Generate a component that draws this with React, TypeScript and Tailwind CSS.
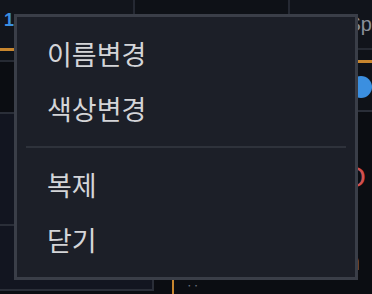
import React from 'react';

const items = ['이름변경', '색상변경'];
const items2 = ['복제', '닫기'];

function MenuItem({ label }: { label: string }) {
  return (
    <div className="flex h-[55px] items-center pl-[30px] text-[27px] leading-none text-[#d4d5d8]">
      {label}
    </div>
  );
}

export default function App() {
  return (
    <div
      className="relative flex h-[294px] w-[372px] flex-col overflow-hidden bg-[#0b0d12]"
      style={{ fontFamily: '"Noto Sans CJK KR", "Noto Sans", sans-serif' }}
    >
      {/* panels behind the menu */}
      <div className="flex h-[279px]">
        <div className="flex w-[140px] flex-col border-r-2 border-[#252933]">
          <div className="h-[48px] bg-[#12151c] pl-[4px] pt-[11px] font-['Liberation_Sans'] text-[18px] font-bold leading-none text-[#3b8fe0]">1</div>
          <div className="h-[3px] bg-[#c8862e]" />
          <div className="h-[11px] border-b-2 border-[#262a33] bg-[#0f1218]" />
          <div className="h-[52px] border-b-2 border-[#2a2e38] bg-[#0b0d12]" />
          <div className="h-[112px] border-b-2 border-[#2a2e38] bg-[#121520]" />
          <div className="flex-1 bg-[#121520]" />
        </div>
        <div className="w-[160px] border-r-2 border-[#252933] bg-[#0e1117]" />
        <div className="flex flex-1 flex-col">
          <div className="h-[50px] border-b-2 border-[#262a33] bg-[#11141b] pl-[58px] pt-[14px] font-['Liberation_Sans'] text-[20px] leading-none text-[#8a8f99]">Sp</div>
          <div className="h-[10px] bg-[#0f1218]" />
          <div className="h-[3px] bg-[#c8862e]" />
          <div className="flex h-[49px] items-center border-b-2 border-[#2a2e38] bg-[#0f1218] pl-[60px]">
            <div className="h-[22px] w-[22px] shrink-0 rounded-full bg-[#3b8fe0]" />
          </div>
          <div className="h-[50px]" />
          <div className="pl-[53px] font-['Liberation_Sans'] text-[30px] leading-none text-[#d05050]">O</div>
          <div className="h-[58px]" />
          <div className="pl-[57px] font-['Liberation_Sans'] text-[24px] leading-none text-[#9aa3ad]">n</div>
        </div>
      </div>
      <div className="flex flex-1">
        <div className="h-[12px] w-[154px] border-b-2 border-r-2 border-[#2a2e38] bg-[#121520]" />
        <div className="ml-[18px] h-full w-[2px] bg-[#c8862e]" />
        <div className="ml-[12px] text-[12px] leading-none text-[#6b7280]">··</div>
      </div>

      {/* context menu */}
      <div className="absolute left-[14px] top-[14px] flex h-[266px] w-[344px] flex-col border-[3px] border-[#3a3e48] bg-[#1c1f28] pb-[10px] pt-[9.5px]">
        {items.map((t) => (
          <MenuItem key={t} label={t} />
        ))}
        <div className="mx-[9px] my-[9.5px] h-[2px] bg-[#2e323b]" />
        {items2.map((t) => (
          <MenuItem key={t} label={t} />
        ))}
      </div>
    </div>
  );
}
